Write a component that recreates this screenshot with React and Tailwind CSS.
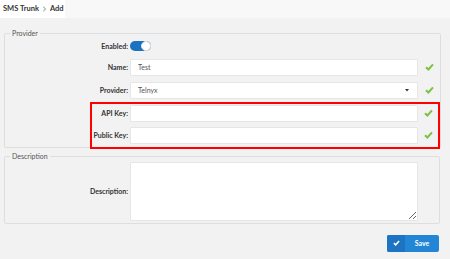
import React from "react";

function Check() {
  return (
    <svg width="9" height="8" viewBox="0 0 9 8" className="block">
      <path d="M1 4.2 L3.4 6.5 L8 1.4" fill="none" stroke="#7cc242" strokeWidth="2" />
    </svg>
  );
}

function Row({ label, labelWidth, children, checkWidth = 22 }) {
  return (
    <div className="flex items-center">
      <label
        className="shrink-0 pr-[2px] text-right text-[7px] font-bold text-[#333]"
        style={{ width: labelWidth }}
      >
        {label}
      </label>
      <div className="w-[288px] shrink-0">{children}</div>
      <div className="flex shrink-0 justify-center" style={{ width: checkWidth }}>
        <Check />
      </div>
    </div>
  );
}

const inputCls =
  "block h-[17px] w-full rounded-[1px] border border-[#e6e6e6] bg-white px-[7px] text-[7px] text-[#555] outline-none";

export default function App() {
  return (
    <div
      className="h-[259px] w-[450px] overflow-hidden bg-[#f2f2f2]"
      style={{ fontFamily: "Lato, 'Open Sans', sans-serif" }}
    >
      {/* breadcrumb */}
      <div className="flex h-[18px] bg-[#f8f8f8]">
        <div className="flex w-[65px] items-center gap-[3px] bg-white pl-[3px] text-[7.5px] font-bold text-[#333]">
          <span>SMS Trunk</span>
          <svg width="5" height="6" viewBox="0 0 5 6">
            <path d="M1.2 0.8 L3.6 3 L1.2 5.2" fill="none" stroke="#888" strokeWidth="1" />
          </svg>
          <span>Add</span>
        </div>
      </div>

      {/* Provider */}
      <fieldset className="ml-[4px] mt-[11px] w-[436px] rounded-[2px] border border-[#dedede]">
        <legend className="ml-[5px] px-[2px] text-[7px] leading-[9px] text-[#555]">Provider</legend>
        <div className="mt-[3px] flex items-center">
          <label className="w-[125px] shrink-0 pr-[2px] text-right text-[7px] font-bold text-[#333]">
            Enabled:
          </label>
          <div className="relative h-[10px] w-[21px] rounded-full bg-[#1b72c0]">
            <div className="absolute right-[0px] top-[0px] h-[10px] w-[10px] rounded-full border border-[#e5e5e5] bg-white" />
          </div>
        </div>
        <div className="mt-[7px]">
          <Row label="Name:" labelWidth={125}>
            <input className={inputCls} defaultValue="Test" />
          </Row>
        </div>
        <div className="mt-[6px]">
          <Row label="Provider:" labelWidth={125}>
            <div className={inputCls + " flex items-center justify-between pr-[8px]"}>
              <span>Telnyx</span>
              <svg width="4" height="3" viewBox="0 0 4 3">
                <path d="M0 0 H4 L2 2.5 Z" fill="#333" />
              </svg>
            </div>
          </Row>
        </div>
        <div className="-mb-[2px] ml-[85px] mt-[3px] flex w-[350px] flex-col gap-[5px] border-2 border-[#f00] pb-[3px] pt-[1px]">
          <Row label="API Key:" labelWidth={38} checkWidth={20}>
            <input className={inputCls} />
          </Row>
          <Row label="Public Key:" labelWidth={38} checkWidth={20}>
            <input className={inputCls} />
          </Row>
        </div>
      </fieldset>

      {/* Description */}
      <fieldset className="ml-[4px] mt-[4px] w-[436px] rounded-[2px] border border-[#dedede]">
        <legend className="ml-[5px] px-[2px] text-[7px] leading-[9px] text-[#555]">Description</legend>
        <div className="mb-[2px] mt-[1px] flex items-center">
          <label className="w-[125px] shrink-0 pr-[2px] text-right text-[7px] font-bold text-[#333]">
            Description:
          </label>
          <textarea className="block h-[59px] w-[288px] rounded-[1px] border border-[#e6e6e6] bg-white px-[7px] text-[7px] text-[#555] outline-none" />
        </div>
      </fieldset>

      {/* actions */}
      <div className="ml-[4px] mt-[11px] flex w-[435px] justify-end">
        <button className="flex h-[17px] w-[52px] overflow-hidden rounded-[2px] bg-[#2385d6] text-[7px] font-bold text-white">
          <span className="flex h-full w-[18px] items-center justify-center bg-[#1c74c2]">
            <svg width="7" height="6" viewBox="0 0 9 8">
              <path d="M1 4.2 L3.4 6.5 L8 1.4" fill="none" stroke="#fff" strokeWidth="2" />
            </svg>
          </span>
          <span className="flex h-full flex-1 items-center justify-center">Save</span>
        </button>
      </div>
    </div>
  );
}
